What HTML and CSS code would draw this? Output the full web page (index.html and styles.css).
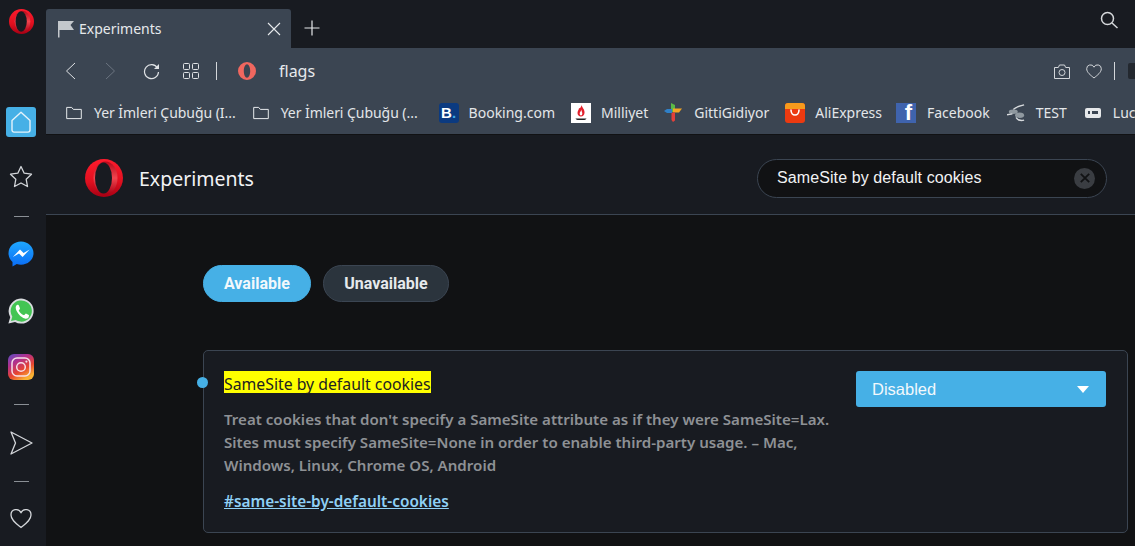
FILE: index.html
```html
<!DOCTYPE html>
<html lang="en">
<head>
    <meta charset="UTF-8">
    <meta name="viewport" content="width=device-width, initial-scale=1.0">
    <title>Experiments</title>
    <link rel="stylesheet" href="styles.css">
</head>
<body>
    <svg class="defs" width="0" height="0" aria-hidden="true">
        <defs>
            <linearGradient id="operaRed" x1="0" y1="0" x2="0" y2="1">
                <stop offset="0" stop-color="#ff1b2d"/>
                <stop offset="0.6" stop-color="#e0101f"/>
                <stop offset="1" stop-color="#a70014"/>
            </linearGradient>
            <linearGradient id="operaInner" x1="0" y1="0" x2="0" y2="1">
                <stop offset="0" stop-color="#b5091a"/>
                <stop offset="0.5" stop-color="#f2444e"/>
                <stop offset="1" stop-color="#a70014"/>
            </linearGradient>
            <linearGradient id="msgBlue" x1="0" y1="0" x2="0" y2="1">
                <stop offset="0" stop-color="#1fa8ff"/>
                <stop offset="1" stop-color="#0a6cf5"/>
            </linearGradient>
            <linearGradient id="igGrad" x1="0" y1="0" x2="0.6" y2="1">
                <stop offset="0" stop-color="#5b4fc4"/>
                <stop offset="0.35" stop-color="#b0308f"/>
                <stop offset="0.7" stop-color="#e8452f"/>
                <stop offset="1" stop-color="#f9b233"/>
            </linearGradient>
            <symbol id="opera" viewBox="0 0 38 38">
                <circle cx="19" cy="19" r="19" fill="url(#operaRed)"/>
                <ellipse cx="20.5" cy="19" rx="12" ry="16.5" fill="url(#operaInner)"/>
                <ellipse cx="18.5" cy="19" rx="8.5" ry="15.5" fill="#181b21"/>
            </symbol>
            <symbol id="folder" viewBox="0 0 16 14">
                <path d="M.7 12.6V1.4h5l1.6 2h8v9.2z" fill="none" stroke="#e6e9ec" stroke-width="1"/>
            </symbol>
        </defs>
    </svg>

    <div class="app">
        <aside class="sidebar">
            <svg class="side-logo"><use href="#opera"/></svg>
            <div class="side-home">
                <svg width="20" height="22" viewBox="0 0 20 22"><path d="M1 9.5 10 1.2l9 8.3v9.6a2 2 0 0 1-2 2H3a2 2 0 0 1-2-2z" fill="none" stroke="#e4f3fb" stroke-width="1.4" stroke-linejoin="round"/></svg>
            </div>
            <svg class="side-icon side-star" viewBox="0 0 26 26"><path d="M13 2.500l3.200 6.700 7.300 1-5.300 5.100 1.300 7.200L13 19l-6.500 3.500 1.300-7.200-5.300-5.100 7.300-1z" fill="none" stroke="#d3d6da" stroke-width="1.300" stroke-linejoin="round"/></svg>
            <div class="side-dash side-dash-first"></div>
            <svg class="side-icon side-messenger" viewBox="0 0 26 26">
                <path d="M13 .5C6 .5.5 5.600.5 12.200c0 3.500 1.500 6.600 4 8.700V25.500l4.300-2.400c1.300.4 2.700.6 4.200.6 7 0 12.500-5.100 12.500-11.500S20 .5 13 .5z" fill="url(#msgBlue)"/>
                <path d="M4.800 16 12 8.500l3.600 3.400 6-3.400-7 7.500-3.600-3.400z" fill="#fff"/>
            </svg>
            <svg class="side-icon side-whatsapp" viewBox="0 0 26 26">
                <path d="M.4 25.600l1.800-6.400A12.500 12.500 0 1 1 7 24z" fill="#d9dcdf"/>
                <path d="M3 23l1.300-4.300A10.600 10.600 0 1 1 7.600 22z" fill="#43c553"/>
                <path d="M9.500 6.800c-.6 0-1.800 1-1.800 3 0 2.200 1.500 4.300 1.800 4.700.3.400 3 4.700 7.300 6 2.200.6 3.500-.5 3.900-1.600.3-.8.3-1.600.2-1.800l-3-1.500c-.3 0-.9.900-1.500 1.500-.3.200-.6.200-1 0-1.200-.5-3.500-2-4.700-4.500 0-.4.900-1 1.300-1.900 0-.3-.9-2.800-1.300-3.400-.3-.5-.7-.5-1.200-.5z" fill="#fff"/>
            </svg>
            <svg class="side-icon side-instagram" viewBox="0 0 26 26">
                <rect width="26" height="26" rx="6" fill="url(#igGrad)"/>
                <rect x="4" y="4" width="18" height="18" rx="5" fill="none" stroke="#f6dfe8" stroke-width="1.500"/>
                <circle cx="13" cy="13" r="4.300" fill="none" stroke="#f6dfe8" stroke-width="1.500"/>
                <circle cx="18.400" cy="7.600" r="1.100" fill="#f6dfe8"/>
            </svg>
            <div class="side-dash side-dash-second"></div>
            <svg class="side-icon side-send" viewBox="0 0 26 26"><path d="M3 2l21 11L3 24l4.500-11z" fill="none" stroke="#d3d6da" stroke-width="1.300" stroke-linejoin="round"/></svg>
            <div class="side-dash side-dash-third"></div>
            <svg class="side-icon side-heart" viewBox="0 0 26 26"><path d="M13 22.500C8 18.500 3 15 3 10a5.200 5.200 0 0 1 10-2.200A5.200 5.200 0 0 1 23 10c0 5-5 8.500-10 12.500z" fill="none" stroke="#d3d6da" stroke-width="1.300" stroke-linejoin="round"/></svg>
        </aside>

        <div class="browser">
            <div class="tabstrip">
                <div class="tab">
                    <svg class="tab-flag" viewBox="0 0 18 18"><path d="M1 1h16l-3.500 4L17 10H2.500v7.500H1z" fill="#c4c8cc"/></svg>
                    <span class="tab-title">Experiments</span>
                    <svg class="tab-close" viewBox="0 0 14 14"><path d="M1 1l12 12M13 1 1 13" stroke="#e6e9ec" stroke-width="1.100"/></svg>
                </div>
                <svg class="tab-new" viewBox="0 0 16 16"><path d="M8 .5v15M.5 8h15" stroke="#e6e9ec" stroke-width="1.200"/></svg>
                <svg class="tab-search" viewBox="0 0 18 18"><circle cx="7.500" cy="7.500" r="6" fill="none" stroke="#d5d8db" stroke-width="1.500"/><path d="M12 12l5.500 5" stroke="#d5d8db" stroke-width="1.500"/></svg>
            </div>

            <div class="toolbar">
                <svg class="tool-back" viewBox="0 0 11 18"><path d="M10 1 1.500 9l8.500 8" fill="none" stroke="#dfe2e5" stroke-width="1"/></svg>
                <svg class="tool-forward" viewBox="0 0 11 18"><path d="M1 1l8.500 8L1 17" fill="none" stroke="#6b7480" stroke-width="1"/></svg>
                <svg class="tool-reload" viewBox="0 0 17 17"><path d="M14.500 5A7 7 0 1 0 15.500 9" fill="none" stroke="#dfe2e5" stroke-width="1.200"/><path d="M16 1v5h-5z" fill="#dfe2e5"/></svg>
                <svg class="tool-grid" viewBox="0 0 16 16"><g fill="none" stroke="#dfe2e5" stroke-width="1"><rect x=".5" y=".5" width="6" height="6" rx="1"/><rect x="9.500" y=".5" width="6" height="6" rx="1"/><rect x=".5" y="9.500" width="6" height="6" rx="1"/><rect x="9.500" y="9.500" width="6" height="6" rx="1"/></g></svg>
                <div class="tool-sep tool-sep-left"></div>
                <svg class="address-logo" viewBox="0 0 18 18"><path fill-rule="evenodd" d="M9 0a9 9 0 1 1 0 18A9 9 0 0 1 9 0zm0 2.300C7.200 2.300 5.800 5.300 5.800 9s1.400 6.700 3.200 6.700 3.200-3 3.200-6.700S10.800 2.300 9 2.300z" fill="#f0675f"/></svg>
                <span class="address-text">flags</span>
                <div class="tool-right">
                    <svg class="tool-camera" viewBox="0 0 16 15"><path d="M.5 3.500h3.800L5.500 1h5l1.200 2.500h3.800v11H.5z" fill="none" stroke="#d3d6da" stroke-width="1"/><circle cx="8" cy="8.500" r="3" fill="none" stroke="#d3d6da" stroke-width="1"/></svg>
                    <svg class="tool-heart" viewBox="0 0 16 15"><path d="M8 14C4.500 11 .7 8.500.7 4.700A3.800 3.800 0 0 1 8 3.200a3.800 3.800 0 0 1 7.300 1.500C15.300 8.500 11.500 11 8 14z" fill="none" stroke="#d3d6da" stroke-width="1"/></svg>
                    <div class="tool-sep"></div>
                    <div class="tool-cut"></div>
                </div>
            </div>

            <div class="bookmarks">
                <div class="bookmark bookmark-folder">
                    <svg class="bm-folder"><use href="#folder"/></svg>
                    <span class="bm-long">Yer İmleri Çubuğu (I...</span>
                </div>
                <div class="bookmark bookmark-folder">
                    <svg class="bm-folder"><use href="#folder"/></svg>
                    <span class="bm-long">Yer İmleri Çubuğu (...</span>
                </div>
                <div class="bookmark">
                    <span class="bm-icon bm-booking">B<i>.</i></span>
                    <span>Booking.com</span>
                </div>
                <div class="bookmark">
                    <svg class="bm-icon" viewBox="0 0 20 20">
                        <rect width="20" height="20" fill="#fff"/>
                        <path d="M10.500 2c.5 2.500 3.500 4.500 3 8-.3 2-1.500 3.500-3.500 3.500S6.500 12 6.500 10C6.500 7.500 8 7 8 5c1 .8 2-.5 2.500-3z" fill="#e2202c"/>
                        <path d="M10.300 6.500c0 1.500 1 2.500 1 4 0 1.200-.6 2-1.300 2s-1.300-.8-1.300-2c0-1.500 1.300-2 1.600-4z" fill="#fff"/>
                        <path d="M4.500 15.500h11c-.5 1-2 1.500-3 1.500h-5c-1 0-2.500-.5-3-1.500z" fill="#222"/>
                    </svg>
                    <span>Milliyet</span>
                </div>
                <div class="bookmark">
                    <svg class="bm-icon bm-gitti" viewBox="0 0 18 19">
                        <path d="M7 0l4 2v7H7z" fill="#5bb947"/>
                        <path d="M9 5.500h9l-3 4H9z" fill="#f5a623"/>
                        <path d="M7.500 9.500H11v8l-2 1.500-1.500-2z" fill="#e2403a"/>
                        <path d="M0 8l3-2h5v4H3z" fill="#2f80c8"/>
                    </svg>
                    <span>GittiGidiyor</span>
                </div>
                <div class="bookmark">
                    <svg class="bm-icon" viewBox="0 0 20 20">
                        <rect width="20" height="20" rx="3" fill="#ec3a10"/>
                        <path d="M0 6V3a3 3 0 0 1 3-3h14a3 3 0 0 1 3 3v3z" fill="#f79a1c"/>
                        <path d="M6 7c0 3 1.800 5 4 5s4-2 4-5" fill="none" stroke="#fff" stroke-width="1.600" stroke-linecap="round"/>
                    </svg>
                    <span>AliExpress</span>
                </div>
                <div class="bookmark">
                    <span class="bm-icon bm-facebook">f</span>
                    <span>Facebook</span>
                </div>
                <div class="bookmark">
                    <svg class="bm-icon bm-test" viewBox="0 0 20 20">
                        <path d="M19 1C15 2 10 3 7 6" fill="none" stroke="#d8dbde" stroke-width="1.500"/>
                        <ellipse cx="7" cy="8.500" rx="5" ry="2.500" fill="#8f989f"/>
                        <path d="M0 12l6-1" stroke="#d8dbde" stroke-width="1.500"/>
                        <ellipse cx="14" cy="12.500" rx="5" ry="3" fill="#8f989f"/>
                        <path d="M10 15c2 3 5 4 9 3" fill="none" stroke="#d8dbde" stroke-width="1.500"/>
                    </svg>
                    <span>TEST</span>
                </div>
                <div class="bookmark">
                    <svg class="bm-icon" viewBox="0 0 20 20">
                        <rect x="2" y="5" width="16" height="10" rx="2" fill="#e6e8ea"/>
                        <path d="M5 8h2v3h2V8h6v3H5z" fill="#3b4552"/>
                    </svg>
                    <span>Lucky</span>
                </div>
            </div>

            <main class="page">
                <header class="page-header">
                    <svg class="page-logo"><use href="#opera"/></svg>
                    <h1>Experiments</h1>
                    <div class="search">
                        <span>SameSite by default cookies</span>
                        <span class="search-clear">
                            <svg width="10" height="10" viewBox="0 0 10 10"><path d="M.8.8l8.400 8.400M9.200.8.8 9.200" stroke="#111214" stroke-width="1.800"/></svg>
                        </span>
                    </div>
                </header>

                <div class="content">
                    <div class="tabs">
                        <button class="pill pill-active">Available</button>
                        <button class="pill">Unavailable</button>
                    </div>

                    <section class="card">
                        <span class="card-dot"></span>
                        <div class="card-text">
                            <h2><mark>SameSite by default cookies</mark></h2>
                            <p>Treat cookies that don't specify a SameSite attribute as if they were SameSite=Lax. Sites must specify SameSite=None in order to enable third-party usage. – Mac, Windows, Linux, Chrome OS, Android</p>
                            <a href="#same-site-by-default-cookies">#same-site-by-default-cookies</a>
                        </div>
                        <div class="select">
                            <span>Disabled</span>
                            <span class="select-arrow"></span>
                        </div>
                    </section>
                </div>
            </main>
        </div>
    </div>
</body>
</html>
```

FILE: styles.css
```css
html, body {
    margin: 0;
    padding: 0;
    height: 546px;
    overflow: hidden;
    background-color: #111214;
}
body {
    font-family: 'Noto Sans', sans-serif;
    color: #e6e9ec;
}
svg {
    display: block;
    flex-shrink: 0;
}
.defs {
    position: absolute;
}
.app {
    display: flex;
    height: 546px;
}

/* left sidebar */
.sidebar {
    width: 46px;
    flex-shrink: 0;
    background-color: #181b21;
    display: flex;
    flex-direction: column;
    align-items: flex-start;
    padding-top: 9px;
    box-sizing: border-box;
}
.side-logo {
    width: 25px;
    height: 25px;
    margin-left: 9px;
}
.side-home {
    width: 30px;
    height: 30px;
    margin: 73px 0 0 6px;
    background-color: #46b0e6;
    border-radius: 3px;
    display: flex;
    align-items: center;
    justify-content: center;
}
.side-icon {
    width: 26px;
    height: 26px;
    margin-left: 8px;
}
.side-dash {
    width: 15px;
    height: 1px;
    margin-left: 14px;
    background-color: #8a8f95;
}
.side-star { margin-top: 27px; }
.side-dash-first { margin-top: 26px; }
.side-messenger { margin-top: 24px; }
.side-whatsapp { margin-top: 31px; }
.side-instagram { margin-top: 30px; }
.side-dash-second { margin-top: 24px; }
.side-send { margin-top: 25px; }
.side-dash-third { margin-top: 25px; }
.side-heart { margin-top: 23px; }

.browser {
    flex: 1;
    min-width: 0;
    display: flex;
    flex-direction: column;
}

/* tabs */
.tabstrip {
    height: 48px;
    flex-shrink: 0;
    box-sizing: border-box;
    padding-top: 9px;
    background-color: #181b21;
    display: flex;
    align-items: flex-start;
}
.tab {
    width: 245px;
    height: 39px;
    box-sizing: border-box;
    padding: 0 10px 0 11px;
    background-color: #3b4552;
    border-radius: 3px 3px 0 0;
    display: flex;
    align-items: center;
}
.tab-flag {
    width: 18px;
    height: 18px;
}
.tab-title {
    flex: 1;
    margin-left: 4px;
    font-size: 14px;
}
.tab-close {
    width: 14px;
    height: 14px;
}
.tab-new {
    width: 16px;
    height: 16px;
    margin: 11px 0 0 13px;
}
.tab-search {
    width: 18px;
    height: 18px;
    margin: 2px 17px 0 auto;
}

/* toolbar */
.toolbar {
    height: 42px;
    flex-shrink: 0;
    box-sizing: border-box;
    background-color: #3b4552;
    display: flex;
    align-items: center;
    padding: 4px 0 0 19px;
    overflow: hidden;
}
.tool-back {
    width: 11px;
    height: 18px;
}
.tool-forward {
    width: 11px;
    height: 18px;
    margin-left: 29px;
}
.tool-reload {
    width: 17px;
    height: 17px;
    margin-left: 27px;
}
.tool-grid {
    width: 16px;
    height: 16px;
    margin-left: 23px;
}
.tool-sep {
    width: 1px;
    height: 18px;
    background-color: #d3d6da;
}
.tool-sep-left {
    margin-left: 17px;
}
.address-logo {
    width: 18px;
    height: 18px;
    margin-left: 21px;
}
.address-text {
    margin-left: 23px;
    font-size: 16px;
}
.tool-right {
    margin-left: auto;
    display: flex;
    align-items: center;
}
.tool-camera {
    width: 16px;
    height: 15px;
}
.tool-heart {
    width: 16px;
    height: 15px;
    margin: 0 12px 0 16px;
}
.tool-cut {
    width: 7px;
    height: 16px;
    margin-left: 13px;
    background-color: #23282f;
    border-radius: 2px 0 0 2px;
}

/* bookmarks bar */
.bookmarks {
    height: 45px;
    flex-shrink: 0;
    box-sizing: border-box;
    background-color: #3b4552;
    border-bottom: 1px solid #111214;
    padding: 1px 0 0 20px;
    display: flex;
    align-items: center;
    gap: 16px;
    overflow: hidden;
    font-size: 14px;
    color: #e3e6e9;
    white-space: nowrap;
}
.bookmark {
    display: flex;
    align-items: center;
    gap: 10px;
}
.bookmark-folder {
    gap: 12px;
    margin-right: 1px;
}
.bookmark-folder + .bookmark-folder {
    margin-right: 5px;
}
.bm-long {
    letter-spacing: -0.05px;
}
.bm-folder {
    width: 16px;
    height: 14px;
}
.bm-icon {
    width: 20px;
    height: 20px;
    flex-shrink: 0;
}
.bm-booking {
    background-color: #0b3a80;
    border-radius: 3px;
    color: #fff;
    font-family: 'Liberation Sans', sans-serif;
    font-weight: 700;
    font-size: 15px;
    line-height: 20px;
    text-align: center;
}
.bm-booking i {
    color: #3ea8e8;
    font-style: normal;
}
.bm-facebook {
    box-sizing: border-box;
    background-color: #3f63ad;
    color: #fff;
    font-family: 'Liberation Sans', sans-serif;
    font-weight: 700;
    font-size: 22px;
    line-height: 20px;
    text-align: right;
    padding-right: 4px;
    margin-left: -2px;
    margin-right: 1px;
}
.bm-gitti {
    width: 18px;
    height: 19px;
    margin-right: 2px;
}
.bm-test {
    width: 18px;
    margin: 0 1px 0 1px;
}

/* page */
.page {
    flex: 1;
    min-height: 0;
    background-color: #111214;
}
.page-header {
    height: 80px;
    box-sizing: border-box;
    background-color: #181b21;
    border-bottom: 1px solid #3b4552;
    padding: 7px 28px 0 39px;
    display: flex;
    align-items: center;
}
.page-logo {
    width: 38px;
    height: 38px;
}
.page-header h1 {
    margin: 0 0 0 16px;
    font-size: 19.5px;
    font-weight: 400;
    color: #f2f3f5;
}
.search {
    margin-left: auto;
    width: 350px;
    height: 39px;
    box-sizing: border-box;
    padding: 0 11px 0 19px;
    background-color: #111214;
    border: 1px solid #3b4552;
    border-radius: 20px;
    display: flex;
    align-items: center;
    justify-content: space-between;
    font-family: 'Liberation Sans', sans-serif;
    font-size: 16px;
    letter-spacing: 0.1px;
    color: #f2f3f5;
}
.search-clear {
    width: 21px;
    height: 21px;
    border-radius: 50%;
    background-color: #3a3d42;
    display: flex;
    align-items: center;
    justify-content: center;
}
.content {
    padding: 50px 7px 0 157px;
}
.tabs {
    display: flex;
    gap: 12px;
}
.pill {
    height: 37px;
    box-sizing: border-box;
    padding: 0 20.5px;
    background-color: #2b343d;
    border: 1px solid #3b4552;
    border-radius: 19px;
    font-family: 'Roboto', sans-serif;
    font-size: 16px;
    font-weight: 700;
    color: #e6e9ec;
}
.pill-active {
    padding: 0 20px;
    background-color: #46b0e6;
    border-color: #46b0e6;
    color: #f2f8fc;
}
.card {
    position: relative;
    margin-top: 48px;
    height: 183px;
    box-sizing: border-box;
    padding: 20px 21px 0 20px;
    background-color: #181b21;
    border: 1px solid #3b4552;
    border-radius: 5px;
    display: flex;
    justify-content: space-between;
}
.card-dot {
    position: absolute;
    left: -7px;
    top: 26px;
    width: 11px;
    height: 11px;
    border-radius: 50%;
    background-color: #46b0e6;
}
.card-text {
    width: 620px;
}
.card h2 {
    margin: 0;
    font-size: 15.8px;
    font-weight: 400;
    line-height: 22px;
}
.card mark {
    display: inline-block;
    background-color: #ffff00;
    color: #222;
    padding-top: 2px;
    height: 20px;
}
.card p {
    margin: 13px 0 0;
    font-size: 15.1px;
    font-weight: 600;
    line-height: 23px;
    color: #8e9195;
}
.card a {
    display: inline-block;
    margin-top: 13px;
    font-size: 15.35px;
    font-weight: 600;
    line-height: 23px;
    color: #8fd0f5;
}
.select {
    width: 250px;
    height: 36px;
    box-sizing: border-box;
    padding: 1px 17px 0 16px;
    background-color: #46b0e6;
    border-radius: 3px;
    display: flex;
    align-items: center;
    justify-content: space-between;
    font-family: 'Liberation Sans', sans-serif;
    font-size: 16.5px;
    color: #f2f8fc;
}
.select-arrow {
    width: 0;
    height: 0;
    border-left: 6px solid transparent;
    border-right: 6px solid transparent;
    border-top: 7px solid #fff;
}
```
